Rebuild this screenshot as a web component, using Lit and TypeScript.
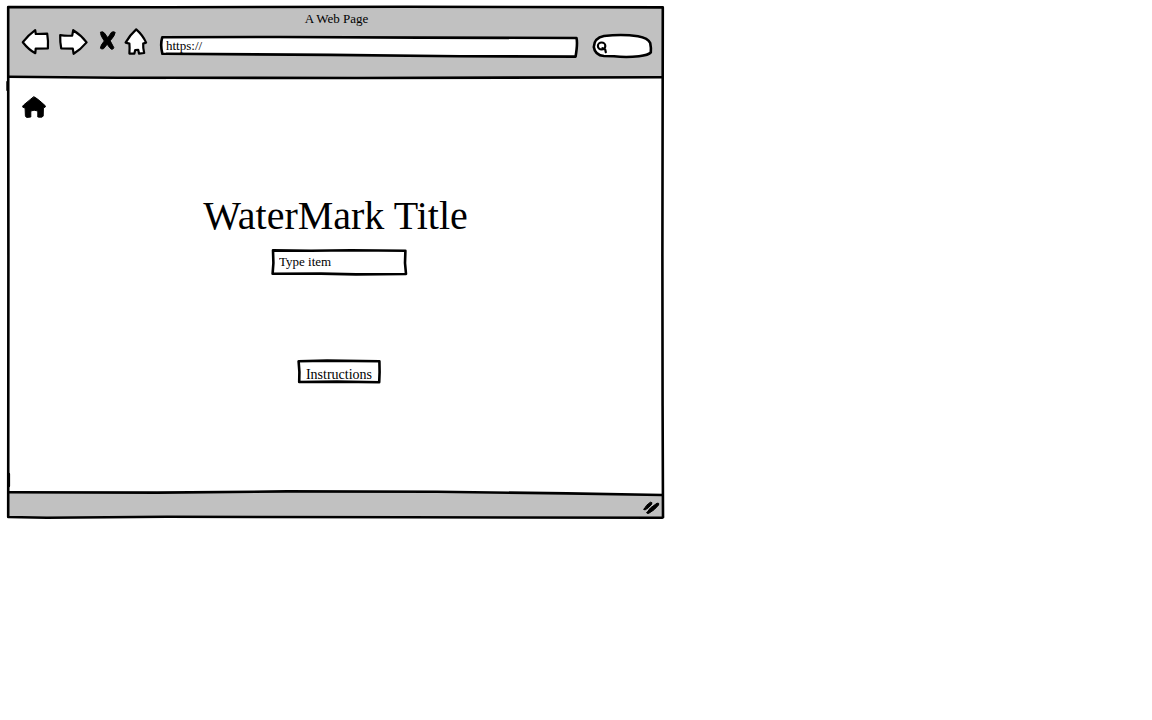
import { LitElement, html, css, svg } from "lit";
import { customElement } from "lit/decorators.js";

// Hand-drawn outline that stretches with the box it sits in.
const sketch = (width: number, height: number, shapes: unknown) => html`
  <svg class="sketch" viewBox="0 0 ${width} ${height}" preserveAspectRatio="none" aria-hidden="true">${shapes}</svg>
`;

@customElement("app-root")
export class AppRoot extends LitElement {
  static styles = css`
    :host {
      display: block;
      box-sizing: border-box;
      min-height: 100vh;
      padding: 6px 7px;
      background: #fff;
      color: #000;
      font-family: "Liberation Serif", "Times New Roman", serif;
      font-size: 13px;
      line-height: 16px;
    }
    * {
      box-sizing: border-box;
    }
    .window {
      position: relative;
      max-width: 657px;
      background: #fff;
    }
    .sketch {
      position: absolute;
      inset: 0;
      width: 100%;
      height: 100%;
      overflow: visible;
      pointer-events: none;
      fill: none;
      stroke: #000;
      stroke-width: 2.6;
      stroke-linejoin: round;
      stroke-linecap: round;
    }
    .sketch .gray {
      fill: #c1c1c1;
      stroke: none;
    }
    .sketch .paper {
      fill: #fff;
    }
    .sketch .lens {
      stroke-width: 2.2;
    }
    .header {
      position: relative;
      padding: 5px 12px 20px 14px;
    }
    .caption {
      position: relative;
      text-align: center;
    }
    .toolbar {
      position: relative;
      display: flex;
      align-items: flex-end;
      gap: 12px;
      height: 31px;
    }
    .nav {
      display: flex;
      align-self: flex-start;
      gap: 8px;
      padding-top: 1px;
    }
    button,
    input {
      margin: 0;
      border: 0;
      padding: 0;
      background: none;
      color: inherit;
      font: inherit;
    }
    input::placeholder {
      color: inherit;
      opacity: 1;
    }
    .tool {
      display: block;
      cursor: pointer;
    }
    .icon {
      display: block;
      overflow: visible;
      fill: #fff;
      stroke: #000;
      stroke-width: 2.2;
      stroke-linejoin: round;
      stroke-linecap: round;
    }
    .solid {
      fill: #000;
      stroke-width: 1;
    }
    .field {
      position: relative;
      display: block;
    }
    .field input {
      position: relative;
      display: block;
      width: 100%;
      height: 100%;
    }
    .url {
      flex: 1;
      height: 23px;
    }
    .url input {
      padding: 0 6px 2px;
    }
    .search {
      width: 62px;
      height: 25px;
    }
    .search input {
      padding: 0 8px 0 20px;
    }
    .main {
      min-height: 414px;
      padding: 17px 14px;
    }
    .home {
      display: inline-block;
      vertical-align: top;
    }
    .title {
      margin: 73px 0 9px;
      text-align: center;
      font-size: 40px;
      font-weight: normal;
      line-height: 48px;
    }
    .form {
      display: flex;
      flex-direction: column;
      align-items: center;
      gap: 84px;
      padding-left: 7px;
    }
    .item {
      width: 136px;
      height: 27px;
    }
    .item input {
      padding: 0 8px 2px;
    }
    .instructions {
      position: relative;
      width: 84px;
      height: 25px;
      padding-top: 4px;
      font-size: 14px;
      cursor: pointer;
    }
    .label {
      position: relative;
    }
    .footer {
      position: relative;
      display: flex;
      align-items: center;
      justify-content: flex-end;
      height: 27px;
      padding: 4px 4px 0;
    }
    .grip {
      position: relative;
    }
  `;

  render() {
    return html`
      <div class="window">
        <header class="header">
          ${sketch(657, 72, svg`
            <path class="gray" d="M1 1H656V71L350 72L1 71Z" />
            <path d="M2 70.8L110 71.7Q200 72.3 350 72L500 71.6L655 71.2" />
          `)}
          <div class="caption">A Web Page</div>
          <div class="toolbar">
            <nav class="nav" aria-label="Browser">
              <button class="tool" aria-label="Back">
                <svg class="icon" width="28" height="28" viewBox="0 0 28 28">
                  <path d="M1.8 14.2Q7 7.4 14.2 2.2L14.8 6L26.2 5.6Q27.4 13 26.9 20.4L14.7 20.6L14.3 25.2Q7.6 21.6 1.8 14.2Z" />
                </svg>
              </button>
              <button class="tool" aria-label="Forward">
                <svg class="icon" width="32" height="28" viewBox="0 0 32 28">
                  <path d="M3.2 7.2Q9 8 15.2 7.6L16.2 2.2Q24 7 29.6 14.4Q23.6 21.6 16.6 25.8L15.8 20.6L4.2 20.3Q3 14 3.2 7.2Z" />
                </svg>
              </button>
              <button class="tool" aria-label="Stop">
                <svg class="icon solid" width="19" height="28" viewBox="0 0 19 28">
                  <path d="M3.8 4.2Q5.6 2.9 7.3 4.9L10.8 9.8L14.4 4.4Q16.4 3 18.2 4.4Q17.9 7.6 13.2 12.8L16.8 19.6Q16.5 21.4 14.6 21.3Q12.6 20.2 10.2 16.2L6.7 20.6Q4.8 21.6 3.4 20.2Q3.6 17 7.3 13L4.4 8.2Q3.3 5.8 3.8 4.2Z" />
                </svg>
              </button>
              <button class="tool" aria-label="Up">
                <svg class="icon" width="24" height="28" viewBox="0 0 24 28">
                  <path d="M12.2 1.4Q18.8 7.2 22.1 14.6L19.2 15.6Q18.9 20 20.2 25L15 25.6L14.2 21.8L11.2 22L10.4 25.6L5.4 25.6Q5.8 20 5.4 15.6L1.6 14.6Q5.8 7.2 12.2 1.4Z" />
                </svg>
              </button>
            </nav>
            <label class="field url">
              ${sketch(418, 23, svg`<path class="paper" d="M2.3 2.2L120 2L260 2.6L416.5 3Q417.8 8 415.6 21.6L300 21.2L170 19.9L2.4 18.8Q0 10 2.3 2.2Z" />`)}
              <input type="text" aria-label="Address" placeholder="https://" />
            </label>
            <label class="field search">
              ${sketch(62, 25, svg`
                <path class="paper" d="M3.8 14Q4 5 14 3Q32 1 48 3.2Q58 5 60.2 10Q61.4 16 60.8 19.4Q58.6 22.2 49 23.2Q36 24.8 24 23.2L14 23Q5 22.4 3.8 14Z" />
                <ellipse class="lens" cx="11.6" cy="13" rx="3.7" ry="3.5" />
                <path class="lens" d="M12.4 15.2L15.2 16.6L15.8 19.2" />
              `)}
              <input type="text" aria-label="Search" />
            </label>
          </div>
        </header>
        <main class="main">
          <a class="home" href="#" aria-label="Home">
            <svg class="icon solid" width="26" height="24" viewBox="0 0 26 24">
              <path d="M13 1.8Q15 2.2 24.3 10.8Q25 12.4 22.4 12.8L22.2 21Q21.5 22.4 19.6 22.3L16.8 22V16Q13 14.4 9.8 16V22L6 22.4Q4.6 22.2 4.4 20.8L4.1 13L1.8 12.2Q1.2 11.2 2.4 10.2Z" />
            </svg>
          </a>
          <h1 class="title">WaterMark Title</h1>
          <div class="form">
            <label class="field item">
              ${sketch(136, 27, svg`<path d="M2 1.4L40 1.8L80 1.2L134.4 1.8L134 14L135 25L85 25.4L50 24.6L1.6 24.8L2.4 14Z" />`)}
              <input type="text" aria-label="Item" placeholder="Type item" />
            </label>
            <button class="instructions">
              ${sketch(84, 25, svg`<path d="M1.6 1.2L30 .6L82.4 1.2L82.6 12L82.2 22.2L40 21.6L2.2 22L2.4 12Z" />`)}
              <span class="label">Instructions</span>
            </button>
          </div>
        </main>
        <footer class="footer">
          ${sketch(657, 27, svg`
            <path class="gray" d="M1 0L425 0L656 3V26L450 25L1 26Z" />
            <path d="M2 .2L150 .6L280 -.6L430 -.2L560 1.4L655 3" />
          `)}
          <svg class="icon solid grip" width="18" height="16" viewBox="0 0 18 16" aria-hidden="true">
            <path d="M2 9.2Q4 4.8 8.4 2.2Q10.8 2 9.6 4.4Q6 8.6 3.2 9.8Q2 10.2 2 9.2Z" />
            <path d="M5 12.4Q7 8 15 3.2Q17.6 2.6 16.6 5Q12.4 10.4 6.6 13.4Q4.6 14 5 12.4Z" />
          </svg>
        </footer>
        ${sketch(657, 513, svg`
          <path d="M1.2 1L160 1.2L400 .8L655.8 1.4L655.4 250L655.6 400L656 510.5Q656.4 511.8 654 511.8L400 511.2L160 510.8L40 511.8L1.2 511L1.4 250L1.2 60Z" />
          <path d="M.6 76V84M1.8 468V480" />
        `)}
      </div>
    `;
  }
}
